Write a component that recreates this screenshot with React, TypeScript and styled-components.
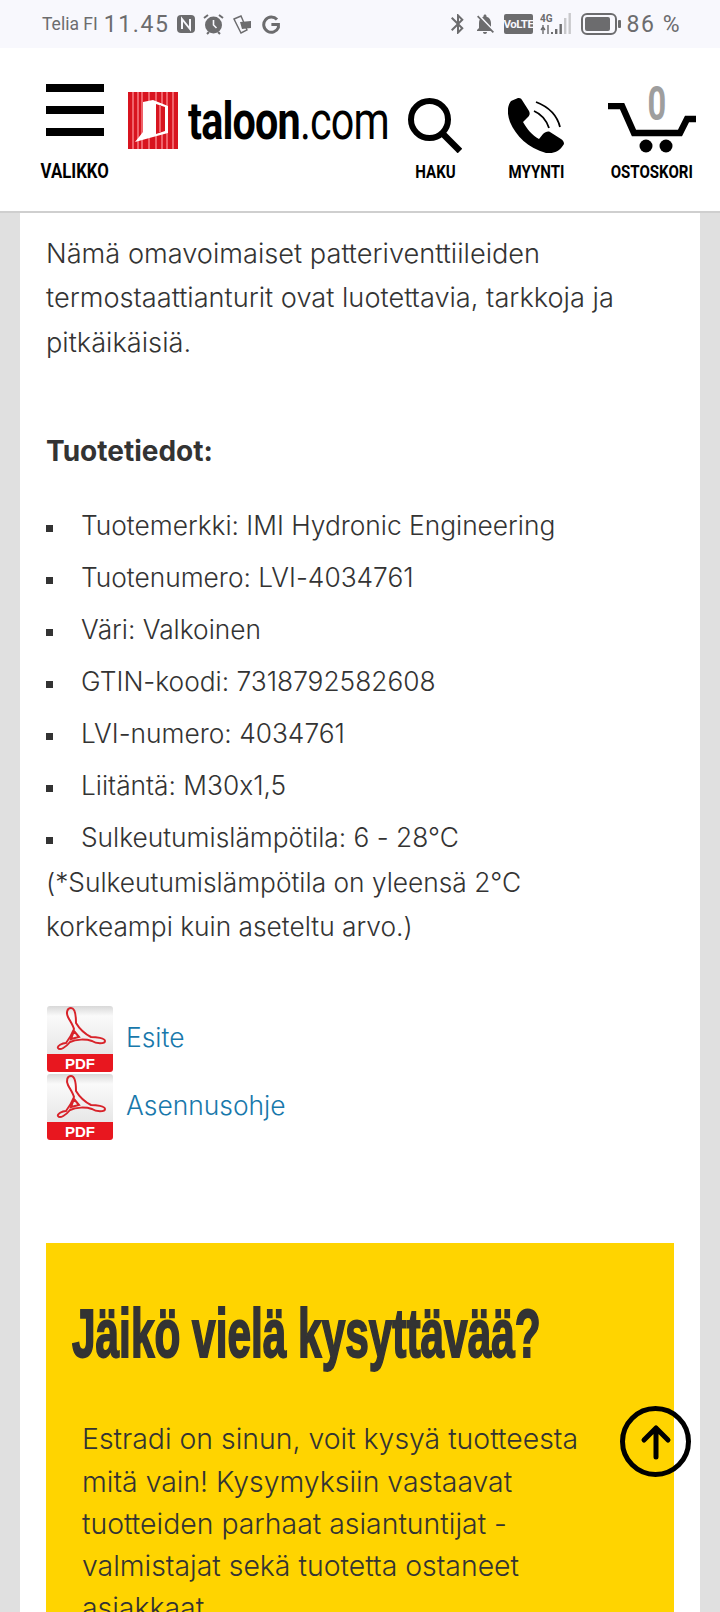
import React from "react";
import styled, {createGlobalStyle} from "styled-components";
import {MdBluetooth, MdNotificationsOff} from "react-icons/md";

const GlobalStyle = createGlobalStyle`
html, body {
  margin: 0;
  padding: 0;
  height: 1612px;
  overflow: hidden;
  background: #e0e0e0;
}
* {
  box-sizing: border-box;
}
`

const Page = styled.div`
width: 720px;
height: 1612px;
overflow: hidden;
position: relative;
background: #e0e0e0;
font-family: "Inter", "Noto Sans", sans-serif;
font-feature-settings: "calt" 0;
color: #333;
`

const StatusBar = styled.div`
height: 48px;
background: #f8f8fd;
display: flex;
align-items: center;
justify-content: space-between;
padding: 0 39px 0 42px;
color: #6c6c6e;
font-family: "Roboto", sans-serif;
`

const StatusSide = styled.div`
display: flex;
align-items: center;
`

const Carrier = styled.span`
font-size: 17.5px;
margin-right: 6px;
`

const Clock = styled.span`
font-size: 23px;
letter-spacing: 1.6px;
margin-right: 8px;
`

const Battery = styled.span`
font-size: 23px;
letter-spacing: 1.5px;
margin-left: 6px;
`

const VolteBadge = styled.span`
width: 29px;
height: 20px;
margin: 0 7px 0 7px;
background: #6c6c6e;
border-radius: 2px;
color: #f8f8fd;
font: 700 11.5px/20px "Roboto", sans-serif;
text-align: center;
letter-spacing: -0.5px;
`

const Header = styled.header`
height: 165px;
background: #fff;
border-bottom: 2px solid #cfcfcf;
display: flex;
align-items: flex-end;
padding: 0 0 30px 40px;
position: relative;
`

const NavItem = styled.div<{$width: number; $left?: number; $gap?: number}>`
width: ${p => p.$width}px;
margin-left: ${p => p.$left ?? 0}px;
display: flex;
flex-direction: column;
align-items: center;
gap: ${p => p.$gap ?? 10}px;
position: relative;
`

const NavLabel = styled.span<{$size?: number}>`
font: 700 ${p => p.$size ?? 17.5}px/18px "Roboto", sans-serif;
color: #000;
display: inline-block;
white-space: nowrap;
transform: scaleX(0.86);
`

const Burger = styled.div`
width: 58px;
display: flex;
flex-direction: column;
gap: 14px;
`

const BurgerBar = styled.span`
display: block;
height: 8px;
background: #000;
`

const Logo = styled.div`
width: 262px;
margin: 0 0 30px 18px;
display: flex;
align-items: center;
gap: 10px;
`

const LogoText = styled.div`
font: 700 51px/58px "Roboto", sans-serif;
color: #000;
white-space: nowrap;
letter-spacing: -1px;
transform: scaleX(0.81);
transform-origin: left center;
width: 202px;
margin-top: 3px;
`

const LogoDomain = styled.span`
font-weight: 400;
`

const CartCount = styled.span`
position: absolute;
top: -23px;
left: 35px;
font: 700 48px/48px "Roboto", sans-serif;
color: #9e9e9e;
display: inline-block;
transform: scaleX(0.68);
`

const Card = styled.main`
margin: 0 20px;
background: #fff;
padding: 19px 26px 0;
height: 1400px;
`

const Paragraph = styled.p`
margin: 0;
font-size: 27.2px;
line-height: 44.4px;
font-weight: 300;
`

const SectionTitle = styled.h3`
margin: 64px 0 31px;
font-size: 28px;
line-height: 44px;
font-weight: 700;
`

const SpecList = styled.ul`
margin: 0;
padding: 0;
list-style: none;
`

const SpecItem = styled.li`
font-size: 26.3px;
line-height: 44.4px;
font-weight: 300;
margin-bottom: 7.6px;

&::before {
  content: "";
  display: inline-block;
  width: 7px;
  height: 7px;
  background: #333;
  margin-right: 28px;
  vertical-align: 3px;
}
`

const Attachments = styled.div`
margin-top: 57px;
display: flex;
flex-direction: column;
`

const Attachment = styled.div`
display: flex;
align-items: center;
gap: 12px;
height: 68px;
`

const AttachmentLink = styled.a`
color: #1878ab;
font-size: 26.4px;
font-weight: 300;
text-decoration: none;
margin-top: -7px;
`

const AskBox = styled.section`
margin-top: 101px;
background: #ffd400;
height: 400px;
padding: 50px 26px 0;
`

const AskTitle = styled.h2`
margin: 0;
font: 700 68px/80px "Liberation Sans", sans-serif;
color: #333;
white-space: nowrap;
transform: scaleX(0.623);
transform-origin: left center;
-webkit-text-stroke: 2px #333;
`

const AskText = styled.p`
margin: 45px 0 0 10px;
width: 535px;
font-size: 28.4px;
line-height: 42.2px;
font-weight: 300;
color: #333;
`

const ScrollTop = styled.button`
position: absolute;
left: 620px;
top: 1406px;
width: 71px;
height: 71px;
border: 5px solid #000;
border-radius: 50%;
background: transparent;
padding: 0;
display: flex;
align-items: center;
justify-content: center;
`

const NfcIcon = () => (
    <svg width="18" height="20" viewBox="0 0 18 20" style={{marginRight: 8}}>
        <rect x="0" y="1" width="18" height="18" rx="4" fill="#6c6c6e"/>
        <path d="M5 15V5l8 10V5" fill="none" stroke="#f8f8fd" strokeWidth="2"/>
    </svg>
)

const AlarmIcon = () => (
    <svg width="21" height="22" viewBox="0 0 21 22" style={{marginRight: 9}}>
        <circle cx="10.5" cy="12" r="8.5" fill="#6c6c6e"/>
        <path d="M1 5l4-3M20 5l-4-3M4 21l2-2M17 21l-2-2" stroke="#6c6c6e" strokeWidth="2" fill="none"/>
        <path d="M10.5 7v5l3 3" stroke="#f8f8fd" strokeWidth="1.6" fill="none"/>
    </svg>
)

const CardsIcon = () => (
    <svg width="19" height="21" viewBox="0 0 19 21" style={{marginRight: 10}}>
        <path d="M1 5l7-3 6 14-6 3z" fill="none" stroke="#6c6c6e" strokeWidth="1.4"/>
        <path d="M7 8l11-1v7l-9 1z" fill="#6c6c6e"/>
    </svg>
)

const GoogleIcon = () => (
    <svg width="18" height="19" viewBox="0 0 18 19">
        <path d="M15 4.6A7.6 7.6 0 1 0 16.4 12.5V9.6H9.4" fill="none" stroke="#6c6c6e" strokeWidth="3"/>
    </svg>
)

const SignalIcon = () => (
    <svg width="32" height="24" viewBox="0 0 32 24" style={{marginRight: 9}}>
        <text x="0" y="10" fontFamily="Roboto" fontWeight="700" fontSize="10" fill="#6c6c6e">4G</text>
        <path d="M3 13v9M1 18l2-3 2 3M8 13v9" stroke="#6c6c6e" strokeWidth="1.4" fill="none"/>
        <rect x="11" y="20" width="2" height="2" fill="#6c6c6e"/>
        <rect x="15" y="17" width="2.4" height="5" fill="#6c6c6e"/>
        <rect x="19.5" y="12" width="2.4" height="10" fill="#6c6c6e"/>
        <rect x="24" y="6" width="2.4" height="16" fill="#c9c9cc"/>
        <rect x="28.5" y="1" width="2.4" height="21" fill="#c9c9cc"/>
    </svg>
)

const BatteryIcon = () => (
    <svg width="40" height="22" viewBox="0 0 40 22">
        <rect x="1" y="1" width="34" height="20" rx="5" fill="none" stroke="#6c6c6e" strokeWidth="2"/>
        <rect x="4" y="4" width="25" height="14" rx="2" fill="#6c6c6e"/>
        <rect x="37" y="7" width="3" height="8" rx="1" fill="#6c6c6e"/>
    </svg>
)

const LogoMark = () => {
    const stripes = [4, 9, 13, 20, 27, 33, 38, 44]
    return (
        <svg width="50" height="57" viewBox="0 0 50 57" style={{flexShrink: 0}}>
            <rect width="50" height="57" fill="#d8141f"/>
            {stripes.map(x => <rect key={x} x={x} y="0" width="2" height="57" fill="#f0626a"/>)}
            <path d="M15 10L25 8L40 14V41L25 45L7 50L15 40Z" fill="#fff"/>
            <path d="M28 12L37 15V39L28 42Z" fill="#d8141f"/>
            <path d="M31 13h2v27h-2z" fill="#f0626a"/>
        </svg>
    )
}

const SearchIcon = () => (
    <svg width="54" height="55" viewBox="0 0 54 55">
        <circle cx="21.5" cy="21.5" r="18.5" fill="none" stroke="#000" strokeWidth="6"/>
        <path d="M34 35l18 18" stroke="#000" strokeWidth="6.5" fill="none"/>
    </svg>
)

const PhoneIcon = () => (
    <svg width="56" height="55" viewBox="0 0 56 55">
        <path d="M10 0L3 3C-1 8-1 16 2 24C8 38 20 50 38 55C46 56 52 53 56 46C56 44 55 42 53 41L42 34C40 33 37 34 35 36L31 41C24 37 19 31 15 24L20 19C22 17 22 15 21 13L14 2C13 0 11 0 10 0Z" fill="#000"/>
        <path d="M28 4C41 9 49 17 52 29M26 13C33 16 38 21 41 30" fill="none" stroke="#000" strokeWidth="1.8"/>
    </svg>
)

const CartIcon = () => (
    <svg width="88" height="50" viewBox="0 0 88 50">
        <path d="M0 3H14L26 30H72L79 16H88" fill="none" stroke="#000" strokeWidth="6.5"/>
        <circle cx="38" cy="43" r="6.5" fill="#000"/>
        <circle cx="58" cy="43" r="6.5" fill="#000"/>
    </svg>
)

const PdfIcon = () => (
    <svg width="68" height="68" viewBox="0 0 68 68">
        <defs>
            <linearGradient id="tile" x1="0" y1="0" x2="0" y2="1">
                <stop offset="0" stopColor="#d8d8d8"/>
                <stop offset="0.2" stopColor="#fafafa"/>
                <stop offset="1" stopColor="#e6e6e6"/>
            </linearGradient>
        </defs>
        <rect x="1" y="0" width="66" height="50" rx="3" fill="url(#tile)"/>
        <path d="M1 48h66v15a3 3 0 0 1-3 3H4a3 3 0 0 1-3-3z" fill="#e8171f"/>
        <path d="M25 2C21 2 20 7 22 11C24 15 27 19 28 23C26 28 23 33 20 37C16 37 11 40 12 42C14 45 20 41 24 36C30 33 40 33 46 35C50 38 59 38 59 35C59 32 50 31 45 31C39 28 33 22 30 17C30 11 29 2 25 2ZM28 25L33 31L25 33Z" fill="none" stroke="#d8232a" strokeWidth="2"/>
        <text x="34" y="62.5" textAnchor="middle" fontFamily="Liberation Sans" fontWeight="700" fontSize="15" fill="#fff">PDF</text>
    </svg>
)

const specs: React.ReactNode[] = [
    "Tuotemerkki: IMI Hydronic Engineering",
    "Tuotenumero: LVI-4034761",
    "Väri: Valkoinen",
    "GTIN-koodi: 7318792582608",
    "LVI-numero: 4034761",
    "Liitäntä: M30x1,5",
    <>Sulkeutumislämpötila: 6 - 28°C<br/>(*Sulkeutumislämpötila on yleensä 2°C<br/>korkeampi kuin aseteltu arvo.)</>,
]

export default function App() {
    return (
        <Page>
            <GlobalStyle/>
            <StatusBar>
                <StatusSide>
                    <Carrier>Telia FI</Carrier>
                    <Clock>11.45</Clock>
                    <NfcIcon/>
                    <AlarmIcon/>
                    <CardsIcon/>
                    <GoogleIcon/>
                </StatusSide>
                <StatusSide>
                    <MdBluetooth size={24}/>
                    <MdNotificationsOff size={24} style={{marginLeft: 3}}/>
                    <VolteBadge>VoLTE</VolteBadge>
                    <SignalIcon/>
                    <BatteryIcon/>
                    <Battery>86 %</Battery>
                </StatusSide>
            </StatusBar>
            <Header>
                <NavItem $width={70} $gap={27}>
                    <Burger>
                        <BurgerBar/>
                        <BurgerBar/>
                        <BurgerBar/>
                    </Burger>
                    <NavLabel $size={19.5}>VALIKKO</NavLabel>
                </NavItem>
                <Logo>
                    <LogoMark/>
                    <LogoText>taloon<LogoDomain>.com</LogoDomain></LogoText>
                </Logo>
                <NavItem $width={70} $left={10}>
                    <SearchIcon/>
                    <NavLabel>HAKU</NavLabel>
                </NavItem>
                <NavItem $width={72} $left={30}>
                    <PhoneIcon/>
                    <NavLabel>MYYNTI</NavLabel>
                </NavItem>
                <NavItem $width={88} $left={36}>
                    <CartCount>0</CartCount>
                    <CartIcon/>
                    <NavLabel>OSTOSKORI</NavLabel>
                </NavItem>
            </Header>
            <Card>
                <Paragraph>Nämä omavoimaiset patteriventtiileiden termostaattianturit ovat luotettavia, tarkkoja ja pitkäikäisiä.</Paragraph>
                <SectionTitle>Tuotetiedot:</SectionTitle>
                <SpecList>
                    {specs.map((s, i) => <SpecItem key={i}>{s}</SpecItem>)}
                </SpecList>
                <Attachments>
                    <Attachment><PdfIcon/><AttachmentLink href="#">Esite</AttachmentLink></Attachment>
                    <Attachment><PdfIcon/><AttachmentLink href="#">Asennusohje</AttachmentLink></Attachment>
                </Attachments>
                <AskBox>
                    <AskTitle>Jäikö vielä kysyttävää?</AskTitle>
                    <AskText>Estradi on sinun, voit kysyä tuotteesta mitä vain! Kysymyksiin vastaavat tuotteiden parhaat asiantuntijat - valmistajat sekä tuotetta ostaneet asiakkaat.</AskText>
                </AskBox>
            </Card>
            <ScrollTop>
                <svg width="32" height="36" viewBox="0 0 32 36">
                    <path d="M16 33V4M4 16L16 4l12 12" fill="none" stroke="#000" strokeWidth="5" strokeLinecap="round" strokeLinejoin="round"/>
                </svg>
            </ScrollTop>
        </Page>
    )
}
